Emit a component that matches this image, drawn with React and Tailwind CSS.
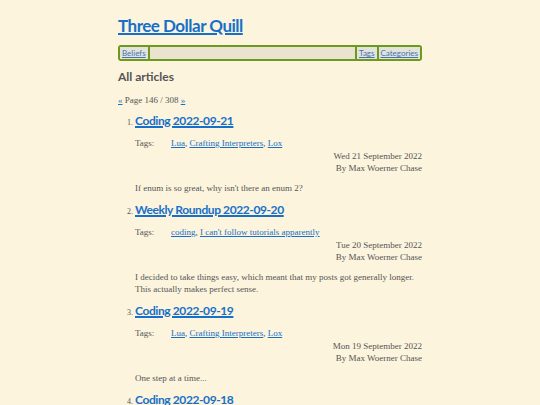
import React from "react";

const sans = { fontFamily: 'Lato, "Open Sans", sans-serif' };
const serif = { fontFamily: '"Liberation Serif", "DejaVu Serif", serif' };

const articles = [
  {
    n: 1,
    title: "Coding 2022-09-21",
    tags: ["Lua", "Crafting Interpreters", "Lox"],
    date: "Wed 21 September 2022",
    excerpt: ["If enum is so great, why isn't there an enum 2?"],
  },
  {
    n: 2,
    title: "Weekly Roundup 2022-09-20",
    tags: ["coding", "I can't follow tutorials apparently"],
    date: "Tue 20 September 2022",
    excerpt: [
      "I decided to take things easy, which meant that my posts got generally longer.",
      "This actually makes perfect sense.",
    ],
  },
  {
    n: 3,
    title: "Coding 2022-09-19",
    tags: ["Lua", "Crafting Interpreters", "Lox"],
    date: "Mon 19 September 2022",
    excerpt: ["One step at a time..."],
  },
  {
    n: 4,
    title: "Coding 2022-09-18",
    tags: ["Lua", "Crafting Interpreters", "Lox"],
    date: "Sun 18 September 2022",
    excerpt: ["..."],
  },
];

function Article({ a }) {
  return (
    <li className="flex flex-col">
      <div className="flex items-baseline">
        <span className="w-[17px] text-right pr-[2px] text-[8px] text-[#555]" style={serif}>
          {a.n}.
        </span>
        <a
          href="#"
          className="text-[12px] tracking-[-0.4px] font-bold leading-[20px] text-[#1670c9] underline decoration-[1.5px]"
          style={sans}
        >
          {a.title}
        </a>
      </div>
      <div className="pl-[17px] text-[9px] text-[#555]" style={serif}>
        <div className="flex mt-[6px] leading-[12px]">
          <span className="w-[36px]">Tags:</span>
          <span>
            {a.tags.map((t, i) => (
              <React.Fragment key={t}>
                <a href="#" className="text-[#1670c9] underline">
                  {t}
                </a>
                {i < a.tags.length - 1 ? ", " : ""}
              </React.Fragment>
            ))}
          </span>
        </div>
        <div className="flex flex-col items-end leading-[12px] mt-[1px]">
          <span>{a.date}</span>
          <span>By Max Woerner Chase</span>
        </div>
        <div className="mt-[8px] leading-[12px]">
          {a.excerpt.map((l) => (
            <div key={l} className="whitespace-nowrap">{l}</div>
          ))}
        </div>
      </div>
    </li>
  );
}

export default function App() {
  return (
    <div className="h-[405px] bg-[#fcf4dd] overflow-hidden">
      <div className="w-[304px] mx-auto pt-[14px]">
        <h1 className="text-[17px] tracking-[-0.5px] leading-[24px] font-bold" style={sans}>
          <a href="#" className="text-[#1670c9] underline decoration-2">
            Three Dollar Quill
          </a>
        </h1>
        <nav
          className="mt-[7px] h-[16px] rounded-[3px] border-2 border-[#6b9a1e] bg-[#e9e3cf] flex items-stretch text-[8px] leading-[12px]"
          style={sans}
        >
          <a href="#" className="px-[2px] text-[#4673b0] underline bg-[#e2e4dc]">
            Beliefs
          </a>
          <span className="w-[2px] bg-[#6b9a1e]" />
          <span className="flex-1" />
          <span className="w-[2px] bg-[#6b9a1e]" />
          <a href="#" className="px-[2px] text-[#4673b0] underline bg-[#e2e4dc]">
            Tags
          </a>
          <span className="w-[2px] bg-[#6b9a1e]" />
          <a href="#" className="px-[2px] text-[#4673b0] underline bg-[#e2e4dc]">
            Categories
          </a>
        </nav>
        <h2 className="mt-[7px] text-[12px] leading-[18px] font-bold text-[#555]" style={sans}>
          All articles
        </h2>
        <div className="mt-[8px] text-[9px] leading-[12px] text-[#555]" style={serif}>
          <a href="#" className="text-[#1670c9] underline">«</a> Page 146 / 308{" "}
          <a href="#" className="text-[#1670c9] underline">»</a>
        </div>
        <ol className="mt-[5px] flex flex-col gap-[6px]">
          {articles.map((a) => (
            <Article key={a.n} a={a} />
          ))}
        </ol>
      </div>
    </div>
  );
}
